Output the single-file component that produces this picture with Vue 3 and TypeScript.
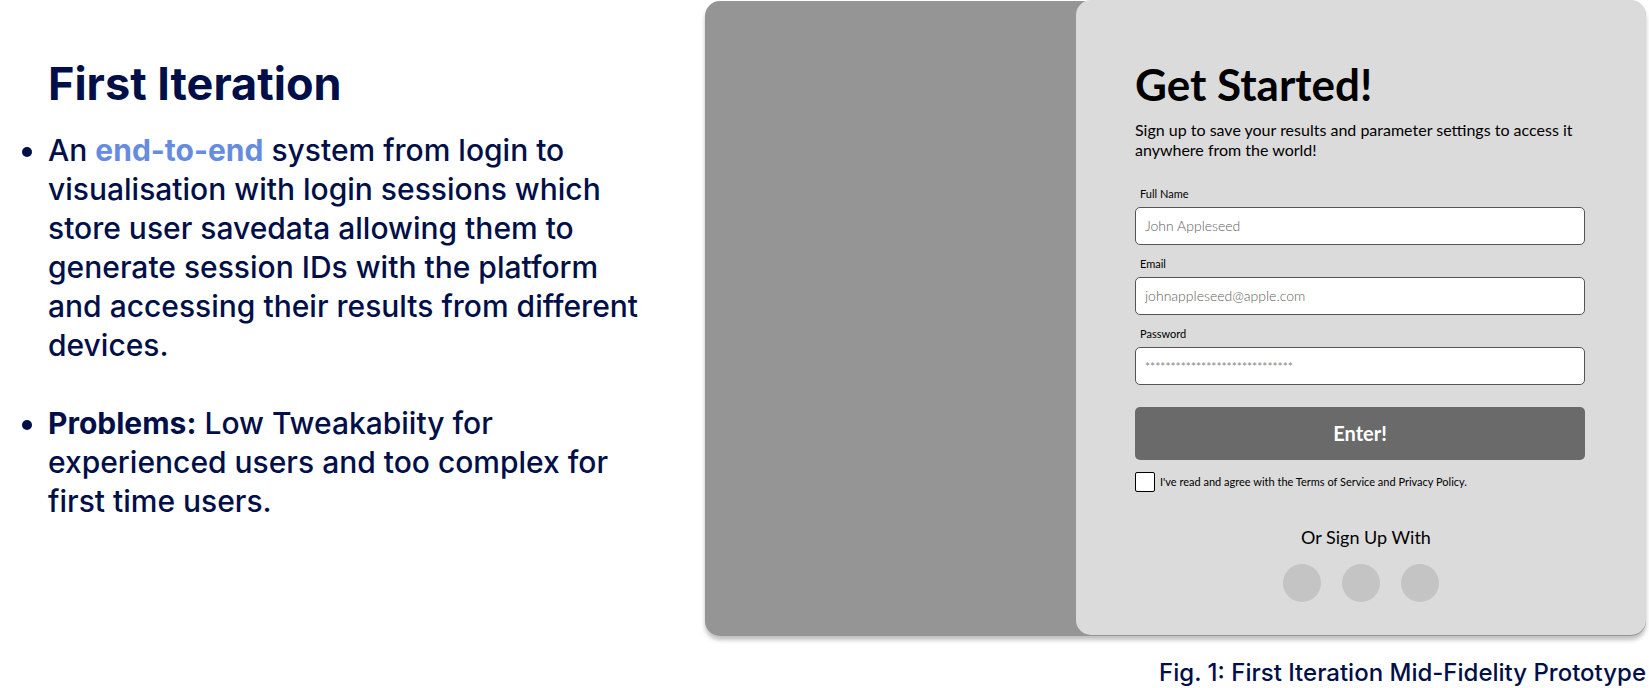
<script setup lang="ts">
import { ref } from 'vue'

interface Field {
  id: string
  label: string
  type: string
  placeholder: string
}

const fields: Field[] = [
  { id: 'full-name', label: 'Full Name', type: 'text', placeholder: 'John Appleseed' },
  { id: 'email', label: 'Email', type: 'email', placeholder: 'johnappleseed@apple.com' },
  { id: 'password', label: 'Password', type: 'password', placeholder: '*****************************' },
]

const providers = ['first', 'second', 'third']
const values = ref<Record<string, string>>({})
const agreed = ref(false)
</script>

<template>
  <main class="page">
    <section class="notes">
      <h1 class="title">First Iteration</h1>
      <ul class="points">
        <li>
          An <strong class="accent">end-to-end</strong> system from login to visualisation with login
          sessions which store user savedata allowing them to generate session IDs with the platform
          and accessing their results from different devices.
        </li>
        <li><strong>Problems:</strong> Low Tweakabiity for experienced users and too complex for first time users.</li>
      </ul>
    </section>

    <figure class="figure">
      <div class="card">
        <div class="cover"></div>
        <form class="panel" @submit.prevent>
          <h2 class="heading">Get Started!</h2>
          <p class="intro">Sign up to save your results and parameter settings to access it anywhere from the world!</p>
          <div v-for="field in fields" :key="field.id" class="field">
            <label :for="field.id">{{ field.label }}</label>
            <input :id="field.id" v-model="values[field.id]" :type="field.type" :placeholder="field.placeholder" />
          </div>
          <button class="enter" type="submit">Enter!</button>
          <div class="terms">
            <input id="terms" v-model="agreed" type="checkbox" />
            <label for="terms">I've read and agree with the Terms of Service and Privacy Policy.</label>
          </div>
          <p class="alternative">Or Sign Up With</p>
          <div class="providers">
            <button v-for="name in providers" :key="name" class="provider" type="button" :aria-label="name"></button>
          </div>
        </form>
      </div>
      <figcaption>Fig. 1: First Iteration Mid-Fidelity Prototype</figcaption>
    </figure>
  </main>
</template>

<style>
body {
  margin: 0;
  background: #fff;
}
</style>

<style scoped>
* {
  box-sizing: border-box;
}

.page {
  display: grid;
  grid-template-columns: 705fr 944fr;
  color: #000f47;
  font-family: Inter, sans-serif;
}

.notes {
  padding: 55px 60px 0 48px;
}

.title {
  margin: 0;
  font-size: 45px;
  line-height: 58px;
  font-weight: 700;
}

.points {
  margin: 18px 0 0;
  padding: 0;
  font-size: 30px;
  line-height: 39px;
  font-weight: 500;
}

.points li + li {
  margin-top: 39px;
}

.points strong {
  font-weight: 700;
}

.points .accent {
  color: #668ce2;
}

.figure {
  margin: 0;
  padding: 1px 3px 0 0;
}

.card {
  display: grid;
  grid-template-columns: 371fr 570fr;
  border-radius: 15px;
  background: #959595;
  box-shadow: 0 4px 4px rgba(0, 0, 0, 0.25);
}

.panel {
  margin: -1px 0 1px;
  padding: 59px 61px 33px 59px;
  border-radius: 15px;
  background: #dbdbdb;
  color: #000;
  font-family: Lato, sans-serif;
}

.heading {
  margin: 0;
  font-size: 44px;
  line-height: 50px;
  font-weight: 700;
}

.intro {
  margin: 11px 0 25px;
  font-size: 16px;
  line-height: 20px;
}

.field {
  margin-bottom: 10px;
}

.field label {
  display: block;
  padding: 0 5px;
  height: 22px;
  font-size: 11px;
  line-height: 18px;
}

.field input {
  display: block;
  width: 100%;
  height: 38px;
  padding: 0 9px 2px;
  border: 1px solid #555;
  border-radius: 5px;
  background: #fff;
  color: #000;
  font: 300 14px/20px Lato, sans-serif;
}

.field input[type='password'] {
  padding-bottom: 0;
  font-size: 12px;
  font-weight: 400;
}

.field input::placeholder {
  color: #606060;
  opacity: 1;
}

.field input[type='password']::placeholder {
  color: #888;
}

.enter {
  display: block;
  width: 100%;
  height: 53px;
  margin-top: 22px;
  padding: 0 0 2px;
  border: 0;
  border-radius: 5px;
  background: #6a6a6a;
  color: #fff;
  font: 700 20px/24px Lato, sans-serif;
}

.terms {
  display: flex;
  align-items: center;
  gap: 5px;
  margin-top: 12px;
  font-size: 11px;
  line-height: 20px;
}

.terms input {
  appearance: none;
  width: 20px;
  height: 20px;
  margin: 0;
  border: 1px solid #000;
  border-radius: 2px;
  background: #fff;
}

.terms input:checked {
  background: #6a6a6a;
}

.alternative {
  margin: 34px 0 0;
  padding-left: 12px;
  font-size: 18px;
  line-height: 22px;
  text-align: center;
}

.providers {
  display: flex;
  justify-content: center;
  gap: 21px;
  margin-top: 16px;
  padding-left: 2px;
}

.provider {
  width: 38px;
  height: 38px;
  padding: 0;
  border: 0;
  border-radius: 50%;
  background: #c4c4c4;
}

figcaption {
  margin-top: 21px;
  font-size: 24px;
  line-height: 31px;
  font-weight: 500;
  text-align: right;
}
</style>
